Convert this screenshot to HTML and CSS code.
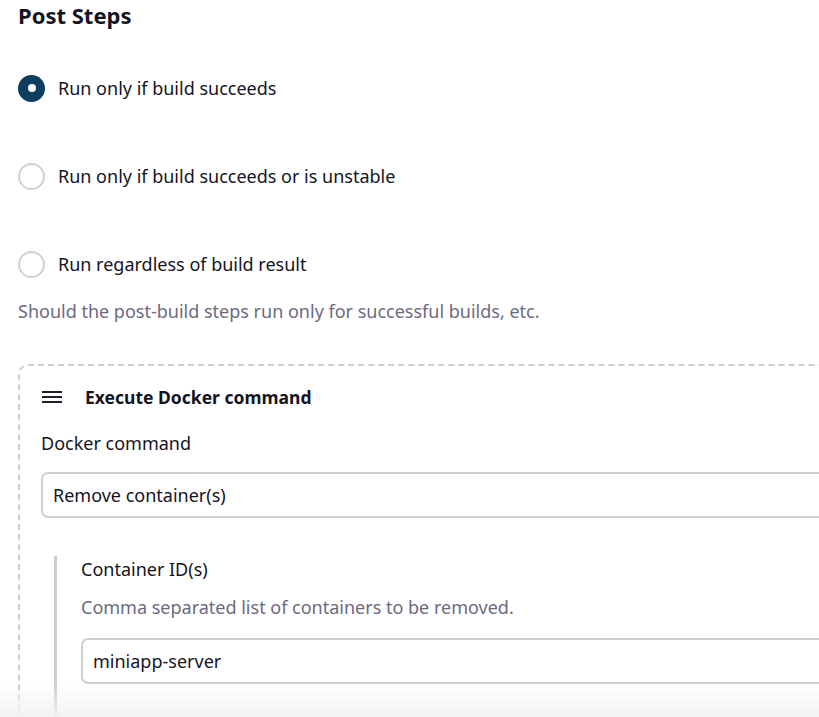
FILE: index.html
```html
<!DOCTYPE html>
<html lang="en">
<head>
<meta charset="utf-8">
<title>Post Steps</title>
<link rel="stylesheet" href="styles.css">
</head>
<body>
<main class="page">
  <h2 class="section-title">Post Steps</h2>
  <div class="radios">
    <label class="radio-row"><span class="radio checked"></span><span class="radio-label">Run only if build succeeds</span></label>
    <label class="radio-row"><span class="radio"></span><span class="radio-label">Run only if build succeeds or is unstable</span></label>
    <label class="radio-row"><span class="radio"></span><span class="radio-label">Run regardless of build result</span></label>
  </div>
  <p class="help">Should the post-build steps run only for successful builds, etc.</p>

  <section class="step">
    <div class="step-head">
      <svg class="handle" width="20" height="12" viewBox="0 0 20 12"><rect x="0" y="0" width="20" height="2" fill="#1f1f2b"/><rect x="0" y="5" width="20" height="2" fill="#1f1f2b"/><rect x="0" y="10" width="20" height="2" fill="#1f1f2b"/></svg>
      <span class="step-title">Execute Docker command</span>
    </div>
    <div class="field-label">Docker command</div>
    <div class="control">Remove container(s)</div>
    <div class="nested">
      <div class="field-label">Container ID(s)</div>
      <p class="help nested-help">Comma separated list of containers to be removed.</p>
      <div class="control">miniapp-server</div>
    </div>
  </section>
</main>
<div class="fade"></div>
</body>
</html>
```

FILE: styles.css
```css
* { box-sizing: border-box; }
html, body { margin: 0; padding: 0; background: #fff; overflow: hidden; }
body {
  font-family: "Noto Sans", "Open Sans", sans-serif;
  color: #14141f;
  font-size: 18px;
  width: 819px;
  height: 717px;
}
.page { padding: 0 0 0 18px; }
.section-title {
  margin: 0;
  padding-top: 0;
  font-size: 22px;
  line-height: 30px;
  font-weight: 700;
}
.radios {
  display: flex;
  flex-direction: column;
  gap: 60px;
  margin-top: 44px;
}
.radio-row {
  display: flex;
  align-items: center;
  gap: 13px;
  height: 28px;
}
.radio {
  width: 27px;
  height: 27px;
  border-radius: 50%;
  border: 2px solid #ccd3d7;
  background: #fff;
  display: flex;
  align-items: center;
  justify-content: center;
  flex: none;
}
.radio.checked {
  border: none;
  background: #0d3d60;
}
.radio.checked::after {
  content: "";
  width: 8px;
  height: 8px;
  border-radius: 50%;
  background: #fff;
}
.radio-label { line-height: 26px; }
.help {
  margin: 20px 0 0;
  color: #6c6a80;
  line-height: 26px;
}
.step {
  margin-top: 40px;
  margin-right: -40px;
  border: 2px dashed #c7cfd3;
  border-radius: 10px;
  padding: 16px 0 20px 21px;
}
.step-head {
  display: flex;
  align-items: center;
  height: 30px;
}
.handle { margin-left: 1px; margin-right: 23px; }
.step-title { font-weight: 700; font-size: 17.5px; }
.field-label {
  line-height: 26px;
  margin-top: 18px;
}
.control {
  margin-top: 16px;
  height: 46px;
  border: 2px solid #c8d0d4;
  border-radius: 7px;
  padding: 0 10px;
  display: flex;
  align-items: center;
  background: #fff;
}
.nested {
  margin-top: 38px;
  margin-left: 13px;
  border-left: 3px solid #c8d0d4;
  padding-left: 24px;
  padding-top: 0;
  padding-bottom: 60px;
}
.nested .field-label { margin-top: 0; }
.nested-help { margin-top: 12px; }
.nested .control { margin-top: 18px; }
.fade {
  position: fixed;
  left: 0;
  right: 0;
  bottom: 0;
  height: 34px;
  background: linear-gradient(to bottom, rgba(245,245,245,0), rgba(242,242,242,0.95));
  pointer-events: none;
}
```
